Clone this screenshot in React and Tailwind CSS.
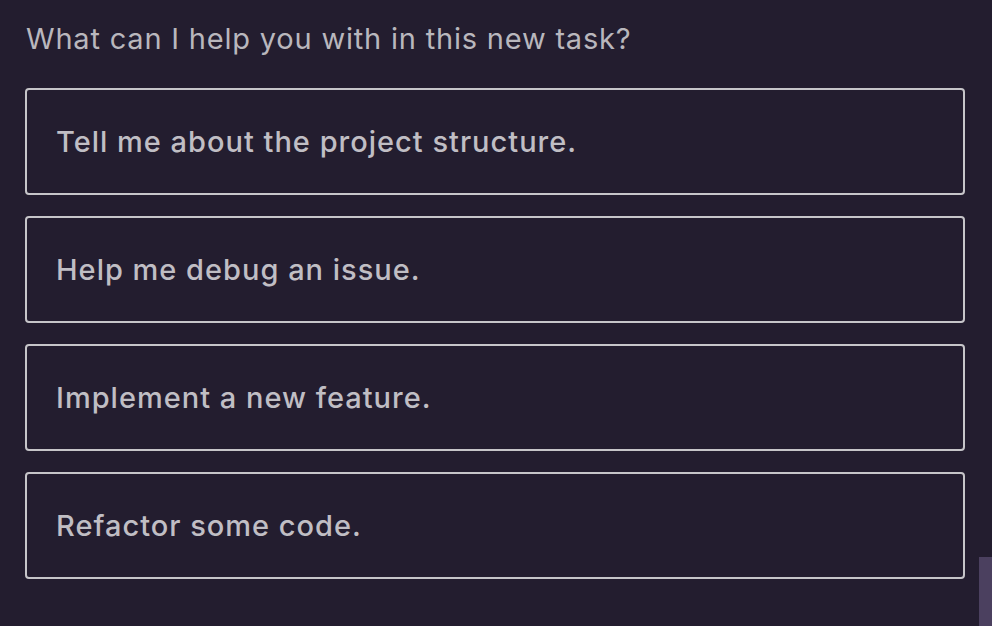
import React from 'react';

const prompts = [
  'Tell me about the project structure.',
  'Help me debug an issue.',
  'Implement a new feature.',
  'Refactor some code.',
];

export default function App() {
  return (
    <div
      className="relative h-[626px] w-[992px] overflow-hidden bg-[#231d2f] text-[#bdbbc2]"
      style={{ fontFamily: 'Inter, "Noto Sans", sans-serif' }}
    >
      <div className="pl-[25px] pr-[27px] pt-[20px]">
        <p className="pl-px text-[29px] leading-[38px] tracking-[0.8px] text-[#b9b7bd]">
          What can I help you with in this new task?
        </p>
        <div className="mt-[30px] flex flex-col gap-[21px]">
          {prompts.map((p) => (
            <button
              key={p}
              className="flex h-[107px] w-full items-center rounded-[4px] border-2 border-[#c6c5c9] pl-[29px] text-left text-[29px] font-medium tracking-[1px] text-[#c0bec4]"
            >
              {p}
            </button>
          ))}
        </div>
      </div>
      <div className="absolute bottom-0 right-0 h-[69px] w-[13px] bg-[#4b405f]" />
    </div>
  );
}
